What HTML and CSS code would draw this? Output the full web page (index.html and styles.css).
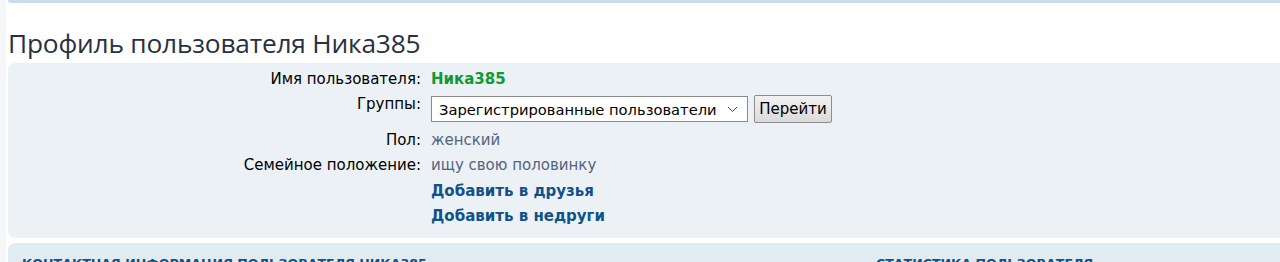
FILE: index.html
```html
<!DOCTYPE html>
<html lang="ru">
<head>
<meta charset="utf-8">
<title>Профиль пользователя Ника385</title>
<link rel="stylesheet" href="styles.css">
</head>
<body>
<div class="wrap">
  <div class="navbar-end"></div>
  <h2 class="page-title">Профиль пользователя Ника385</h2>
  <div class="panel bg1">
    <dl class="details">
      <dt>Имя пользователя:</dt>
      <dd><span class="username">Ника385</span></dd>
      <dt class="mid">Группы:</dt>
      <dd class="group-row">
        <div class="select"><span>Зарегистрированные пользователи</span><svg width="11" height="7" viewBox="0 0 11 7"><path d="M1 1 L5.5 5.5 L10 1" fill="none" stroke="#444" stroke-width="1"/></svg></div>
        <button class="btn" type="button">Перейти</button>
      </dd>
      <dt>Пол:</dt>
      <dd class="val">женский</dd>
      <dt>Семейное положение:</dt>
      <dd class="val">ищу свою половинку</dd>
      <dt></dt>
      <dd><a href="#" class="action">Добавить в друзья</a></dd>
      <dt></dt>
      <dd><a href="#" class="action">Добавить в недруги</a></dd>
    </dl>
  </div>
  <div class="panel bg2 lower">
    <h3 class="col-head first">Контактная информация пользователя Ника385</h3>
    <h3 class="col-head second">Статистика пользователя</h3>
  </div>
</div>
</body>
</html>
```

FILE: styles.css
```css
html, body {
  margin: 0;
  padding: 0;
}
body {
  background: #f5f7fa;
  overflow: hidden;
  height: 262px;
  font-family: "DejaVu Sans", Verdana, sans-serif;
  color: #000;
}
.wrap {
  margin-left: 6px;
  padding-left: 2px;
  width: 1320px;
  background: #fff;
  height: 262px;
  overflow: hidden;
}
.navbar-end {
  height: 3px;
  background: #cadceb;
  border-radius: 0 0 7px 7px;
}
.page-title {
  margin: 0;
  padding-top: 25px;
  height: 35px;
  font-family: "Open Sans", "DejaVu Sans", sans-serif;
  font-weight: normal;
  font-size: 26.3px;
  line-height: 30px;
  color: #28313f;
  letter-spacing: -0.2px;
  white-space: nowrap;
}
.panel {
  border-radius: 7px;
}
.bg1 {
  background: #ebf1f4;
  height: 175px;
  box-sizing: border-box;
  padding-top: 4px;
}
.bg2 {
  background: #e1ebf2;
}
.lower {
  margin-top: 5px;
  height: 40px;
  display: flex;
  padding-top: 14px;
  box-sizing: border-box;
}
.details {
  margin: 0;
  display: grid;
  grid-template-columns: 413px 1fr;
  grid-template-rows: 25px 36px repeat(4, 25.4px);
  column-gap: 10px;
  font-size: 15px;
  line-height: 25px;
}
.details dt {
  text-align: right;
  margin: 0;
  color: #000;
}
.details dd {
  margin: 0;
}
.username {
  color: #0f9a33;
  font-weight: bold;
}
.val {
  color: #536482;
}
.group-row {
  display: flex;
  align-items: flex-start;
  gap: 6px;
  height: 36px;
  padding-top: 3px;
  box-sizing: border-box;
}
.select {
  margin-top: 1px;
  width: 317px;
  height: 26px;
  box-sizing: border-box;
  border: 1px solid #8a8a8a;
  background: #fff;
  display: flex;
  align-items: center;
  justify-content: space-between;
  padding: 0 9px 0 7px;
  font-size: 14.7px;
  color: #000;
  white-space: nowrap;
}
.select svg {
  display: block;
}
.btn {
  width: 78px;
  height: 28px;
  box-sizing: border-box;
  border: 1px solid #8c8c8c;
  border-radius: 2px;
  background: linear-gradient(#f2f2f2, #dadada);
  font-family: "DejaVu Sans", Verdana, sans-serif;
  font-size: 15px;
  color: #000;
  padding: 0;
}
.action {
  color: #105289;
  font-weight: bold;
  text-decoration: none;
}
.col-head {
  margin: 0;
  font-size: 12.6px;
  font-weight: bold;
  text-transform: uppercase;
  color: #105289;
  line-height: 14px;
  white-space: nowrap;
}
.col-head.first {
  margin-left: 14px;
  width: 854px;
}
```
